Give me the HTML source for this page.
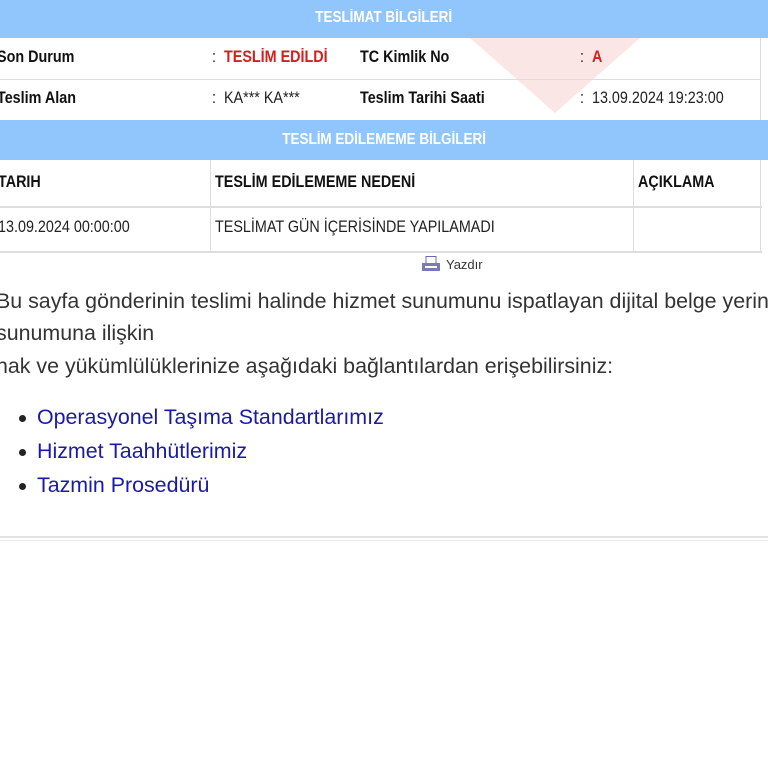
<!DOCTYPE html>
<html><head><meta charset="utf-8"><style>
body{margin:0;width:768px;height:768px;background:#fff;position:relative;overflow:hidden;font-family:"Liberation Sans",sans-serif;}
.a{position:absolute;white-space:nowrap;transform:scaleX(0.87);transform-origin:0 0;}
.hdr{position:absolute;left:0;width:768px;background:#90c6fb;color:#fff;font-weight:bold;font-size:15.5px;text-align:center;}
.hdr span{display:inline-block;transform:scaleX(0.87);}
.ln{position:absolute;background:#ddd;}
.b{font-weight:bold;font-size:16.5px;color:#111;}
.t{font-size:16.5px;color:#222;}
.p{font-size:21.4px;color:#333;position:absolute;white-space:nowrap;}
.li{font-size:21.4px;color:#1a1aa6;position:absolute;white-space:nowrap;}
.dot{position:absolute;width:7px;height:7px;border-radius:50%;background:#222;}
</style></head><body>
<div class="hdr" style="top:0;height:38px;line-height:36px;"><span>TESLİMAT BİLGİLERİ</span></div>
<div style="position:absolute;left:470px;top:38px;width:0;height:0;border-left:85px solid transparent;border-right:85px solid transparent;border-top:75px solid #fbe6e6;"></div>
<div class="ln" style="left:0;top:79px;width:760px;height:1px;"></div>
<div class="ln" style="left:760px;top:38px;width:1px;height:82px;"></div>
<div class="a b" style="left:-3px;top:48px;">Son Durum</div>
<div class="a t" style="left:212px;top:48px;">:&nbsp;&nbsp;<b style="color:#d21f1f">TESLİM EDİLDİ</b></div>
<div class="a b" style="left:360px;top:48px;">TC Kimlik No</div>
<div class="a t" style="left:580px;top:48px;">:&nbsp;&nbsp;<b style="color:#d21f1f">A</b></div>
<div class="a b" style="left:-3px;top:89px;">Teslim Alan</div>
<div class="a t" style="left:212px;top:89px;">:&nbsp;&nbsp;KA*** KA***</div>
<div class="a b" style="left:360px;top:89px;">Teslim Tarihi Saati</div>
<div class="a t" style="left:580px;top:89px;">:&nbsp;&nbsp;13.09.2024 19:23:00</div>
<div class="hdr" style="top:120px;height:40px;line-height:40px;"><span>TESLİM EDİLEMEME BİLGİLERİ</span></div>
<div class="ln" style="left:0;top:206px;width:762px;height:2px;"></div>
<div class="ln" style="left:0;top:251px;width:762px;height:2px;"></div>
<div class="ln" style="left:210px;top:160px;width:1px;height:92px;"></div>
<div class="ln" style="left:633px;top:160px;width:1px;height:92px;"></div>
<div class="ln" style="left:760px;top:160px;width:1px;height:92px;"></div>
<div class="a b" style="left:-2px;top:173px;">TARIH</div>
<div class="a b" style="left:215px;top:173px;">TESLİM EDİLEMEME NEDENİ</div>
<div class="a b" style="left:638px;top:173px;">AÇIKLAMA</div>
<div class="a t" style="left:-2px;top:218px;">13.09.2024 00:00:00</div>
<div class="a t" style="left:215px;top:218px;">TESLİMAT GÜN İÇERİSİNDE YAPILAMADI</div>
<svg style="position:absolute;left:422px;top:256px" width="18" height="16" viewBox="0 0 18 16"><rect x="4" y="0.5" width="10" height="7" fill="#fff" stroke="#6a6aa8"/><rect x="0" y="7" width="18" height="8" fill="#7a7ab8"/><rect x="3" y="10" width="12" height="2" fill="#fff"/></svg>
<div style="position:absolute;left:446px;top:257px;font-size:13px;color:#333;">Yazdır</div>
<div class="p" style="left:-4px;top:289px;">Bu sayfa gönderinin teslimi halinde hizmet sunumunu ispatlayan dijital belge yerine</div>
<div class="p" style="left:-4px;top:321px;">sunumuna ilişkin</div>
<div class="p" style="left:-4px;top:354px;">hak ve yükümlülüklerinize aşağıdaki bağlantılardan erişebilirsiniz:</div>
<div class="dot" style="left:19px;top:415px;"></div>
<div class="dot" style="left:19px;top:449px;"></div>
<div class="dot" style="left:19px;top:483px;"></div>
<div class="li" style="left:37px;top:405px;">Operasyonel Taşıma Standartlarımız</div>
<div class="li" style="left:37px;top:439px;">Hizmet Taahhütlerimiz</div>
<div class="li" style="left:37px;top:473px;">Tazmin Prosedürü</div>
<div class="ln" style="left:0;top:536px;width:768px;height:2px;background:#e2e2e2;"></div>
<div class="ln" style="left:0;top:540px;width:768px;height:1px;background:#e8e8e8;"></div>
</body></html>
